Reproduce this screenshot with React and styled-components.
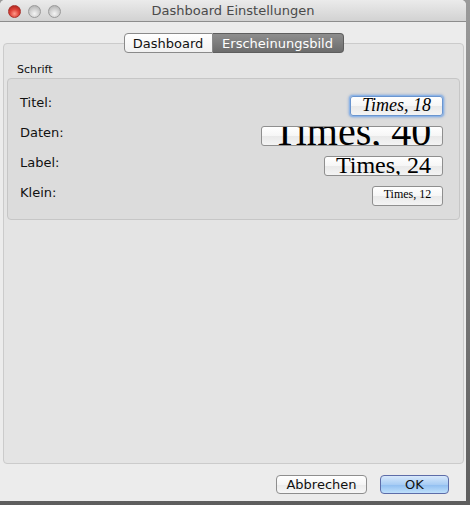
import React from 'react';
import styled, { createGlobalStyle, css } from 'styled-components';

const GlobalStyle = createGlobalStyle`
    html, body {
        margin: 0;
        padding: 0;
    }
    body {
        width: 470px;
        height: 505px;
        background: linear-gradient(#9a9a9a, #5e5e5e);
        font-family: "DejaVu Sans", "Liberation Sans", sans-serif;
        overflow: hidden;
    }
`;

const Window = styled.div`
    width: 466px;
    height: 501px;
    display: flex;
    flex-direction: column;
    background: #ececec;
    border-radius: 5px 5px 0 0;
    overflow: hidden;
`;

const TitleBar = styled.div`
    height: 21px;
    flex: none;
    display: flex;
    align-items: center;
    position: relative;
    background: linear-gradient(#ebebeb, #d2d2d2);
    border-bottom: 1px solid #8d8d8d;
`;

const Lights = styled.div`
    display: flex;
    gap: 7px;
    padding-left: 8px;
    padding-top: 2px;
`;

const Light = styled.span`
    width: 13px;
    height: 13px;
    border-radius: 50%;
    box-sizing: border-box;
    border: 1px solid ${p => (p.$red ? '#a8332d' : '#9a9a9a')};
    background: ${p => (p.$red
        ? 'radial-gradient(circle at 50% 70%, #ff9a8a 0%, #e0443a 45%, #9e1d15 100%)'
        : 'radial-gradient(circle at 50% 70%, #f4f4f4 0%, #cfcfcf 50%, #a8a8a8 100%)')};
`;

const Title = styled.div`
    position: absolute;
    left: 0;
    right: 0;
    top: 3px;
    text-align: center;
    font-size: 13px;
    color: #4a4a4a;
    pointer-events: none;
`;

const Body = styled.div`
    flex: 1;
    display: flex;
    flex-direction: column;
    padding-top: 11px;
`;

const TabStrip = styled.div`
    display: flex;
    justify-content: center;
    position: relative;
    z-index: 1;
    padding-left: 1px;
`;

const Tab = styled.div`
    height: 20px;
    box-sizing: border-box;
    display: flex;
    align-items: center;
    justify-content: center;
    font-size: 13px;
    border: 1px solid #8a8a8a;
    ${p => p.$active
        ? css`
            width: 131px;
            color: #fff;
            background: linear-gradient(#8e8e8e, #6c6c6c);
            border-color: #5e5e5e;
            border-radius: 0 4px 4px 0;
            border-left: none;
        `
        : css`
            width: 89px;
            color: #111;
            background: linear-gradient(#ffffff, #f1f1f1);
            border-radius: 4px 0 0 4px;
        `}
`;

const Panel = styled.div`
    margin: -10px 2px 0 3px;
    height: 421px;
    box-sizing: border-box;
    border: 1px solid #cbcbcb;
    border-radius: 4px;
    background: #e4e4e4;
    padding: 19px 3px 0 3px;
`;

const GroupLabel = styled.div`
    font-size: 11px;
    line-height: 14px;
    color: #111;
    margin: 0 0 1px 10px;
`;

const Group = styled.div`
    border: 1px solid #c6c6c6;
    border-radius: 4px;
    background: #dcdcdc;
    padding: 17px 16px 13px 12px;
    display: flex;
    flex-direction: column;
    gap: 10px;
`;

const Row = styled.div`
    display: flex;
    justify-content: space-between;
    align-items: center;
    height: 20px;
`;

const RowLabel = styled.span`
    font-size: 13px;
    color: #111;
    position: relative;
    top: -4px;
`;

const FontButton = styled.div`
    height: 20px;
    box-sizing: border-box;
    display: flex;
    align-items: center;
    justify-content: center;
    overflow: hidden;
    border: 1px solid #8f8f8f;
    border-radius: 3px;
    background: linear-gradient(#ffffff, #f6f6f6 50%, #e9e9e9 51%, #f4f4f4);
    ${p => p.$focused && css`
        border-color: #6a95cf;
        box-shadow: 0 0 0 1px #8fb5e6, 0 0 2px 2px rgba(120, 160, 220, 0.5);
    `}
`;

const Sample = styled.span`
    font-family: "Liberation Serif", "Times New Roman", serif;
    line-height: 1;
    white-space: nowrap;
    color: #000;
`;

const Footer = styled.div`
    flex: 1;
    display: flex;
    justify-content: flex-end;
    align-items: flex-start;
    gap: 13px;
    padding: 11px 17px 0 0;
`;

const PushButton = styled.button`
    height: 19px;
    box-sizing: border-box;
    padding: 0;
    font-family: "DejaVu Sans", "Liberation Sans", sans-serif;
    font-size: 13px;
    color: #111;
    border-radius: 4px;
    border: 1px solid ${p => (p.$primary ? '#5d6ca8' : '#8e8e8e')};
    width: ${p => (p.$primary ? '69px' : '91px')};
    background: ${p => (p.$primary
        ? 'linear-gradient(#d7e8fb, #a9cdf4 50%, #8fbdf0 51%, #bfe0fb)'
        : 'linear-gradient(#ffffff, #f5f5f5 50%, #ebebeb 51%, #f7f7f7)')};
`;

const fonts = [
    { label: 'Titel:', text: 'Times, 18', size: 18, italic: true, width: 93, shift: -1, focused: true },
    { label: 'Daten:', text: 'Times, 40', size: 40, width: 182, shift: -4 },
    { label: 'Label:', text: 'Times, 24', size: 24, width: 119, shift: -1 },
    { label: 'Klein:', text: 'Times, 12', size: 12, width: 71, shift: -2 }
];

export default function App() {
    return (
        <>
            <GlobalStyle />
            <Window>
                <TitleBar>
                    <Lights>
                        <Light $red />
                        <Light />
                        <Light />
                    </Lights>
                    <Title>Dashboard Einstellungen</Title>
                </TitleBar>
                <Body>
                    <TabStrip>
                        <Tab>Dashboard</Tab>
                        <Tab $active>Erscheinungsbild</Tab>
                    </TabStrip>
                    <Panel>
                        <GroupLabel>Schrift</GroupLabel>
                        <Group>
                            {fonts.map(f => (
                                <Row key={f.label}>
                                    <RowLabel>{f.label}</RowLabel>
                                    <FontButton $focused={f.focused} style={{ width: f.width }}>
                                        <Sample
                                            style={{
                                                fontSize: f.size,
                                                fontStyle: f.italic ? 'italic' : 'normal',
                                                transform: `translateY(${f.shift}px)`
                                            }}
                                        >
                                            {f.text}
                                        </Sample>
                                    </FontButton>
                                </Row>
                            ))}
                        </Group>
                    </Panel>
                    <Footer>
                        <PushButton>Abbrechen</PushButton>
                        <PushButton $primary>OK</PushButton>
                    </Footer>
                </Body>
            </Window>
        </>
    );
}
